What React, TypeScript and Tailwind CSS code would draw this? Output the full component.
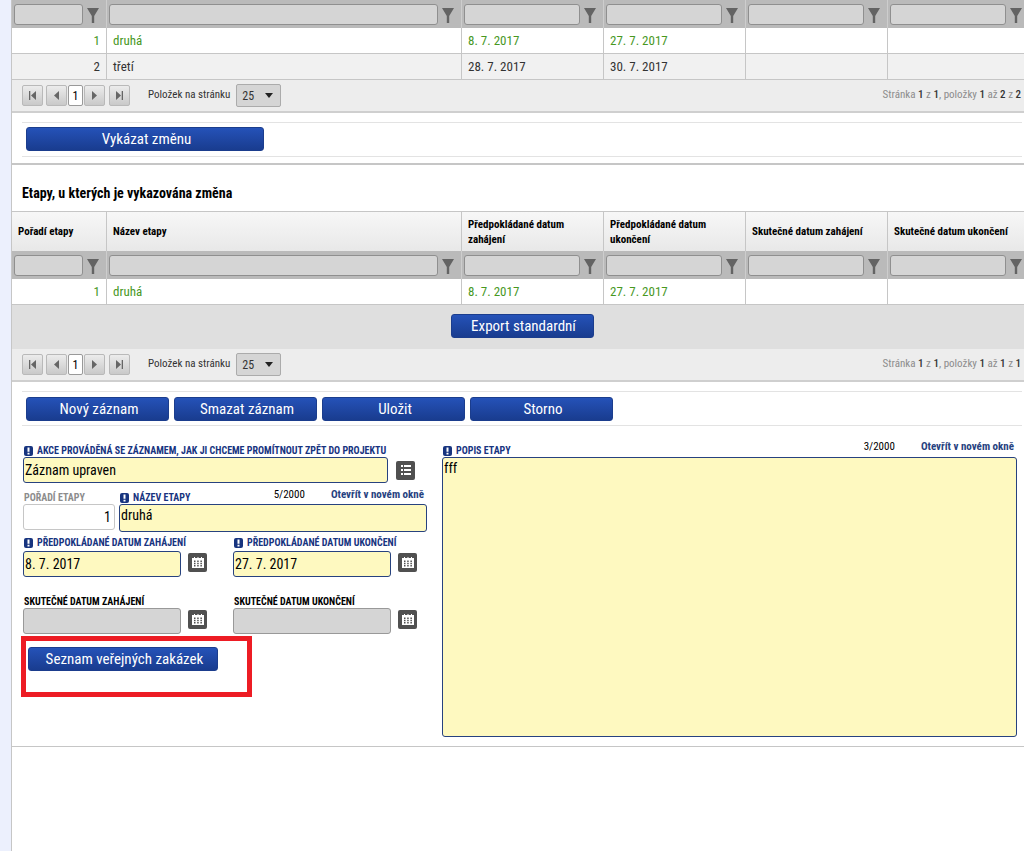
import React from "react";

type Row = {
  order: number;
  name: string;
  plannedStart: string;
  plannedEnd: string;
  changed?: boolean;
};

const columns = [
  "Pořadí etapy",
  "Název etapy",
  "Předpokládané datum zahájení",
  "Předpokládané datum ukončení",
  "Skutečné datum zahájení",
  "Skutečné datum ukončení"
];

const allRows: Row[] = [
  { order: 1, name: "druhá", plannedStart: "8. 7. 2017", plannedEnd: "27. 7. 2017", changed: true },
  { order: 2, name: "třetí", plannedStart: "28. 7. 2017", plannedEnd: "30. 7. 2017" }
];

const changedRows: Row[] = [allRows[0]];

const FunnelIcon = () => (
  <svg width="12" height="15" viewBox="0 0 12 15" fill="#636363">
    <path d="M0 0h12L7.2 8V15H4.8V8z" />
  </svg>
);

const CalendarIcon = () => (
  <svg width="12" height="12" viewBox="0 0 12 12">
    <path d="M0 1h2V0h1v1h2.500V0h1v1H9V0h1v1h2v10H0z" fill="#fff" />
    <path
      d="M2 3.500h1.500V5H2zM5.200 3.500h1.500V5H5.200zM8.400 3.500h1.500V5H8.400zM2 5.800h1.500v1.500H2zM5.200 5.800h1.500v1.500H5.200zM8.400 5.800h1.500v1.500H8.400zM2 8.100h1.500v1.500H2zM5.200 8.100h1.500v1.500H5.200zM8.400 8.100h1.500v1.500H8.400z"
      fill="#505050"
    />
  </svg>
);

const ListIcon = () => (
  <svg width="12" height="12" viewBox="0 0 12 12" fill="#fff">
    <path d="M1 1h2v2H1zM4 1h7v2H4zM1 5h2v2H1zM4 5h7v2H4zM1 9h2v2H1zM4 9h7v2H4z" />
  </svg>
);

const RequiredIcon = () => (
  <svg width="9" height="10" viewBox="0 0 9 10" className="shrink-0">
    <rect width="9" height="10" rx="2" fill="#17347f" />
    <path d="M3.5 1.5h2v4.2h-2zM3.5 6.8h2v1.7h-2z" fill="#fff" />
  </svg>
);

const BlueButton = ({ children, className = "" }: { children: React.ReactNode; className?: string }) => (
  <button
    type="button"
    className={`h-6 rounded-[3px] border border-[#1b3d8d] bg-gradient-to-b from-[#2552b8] to-[#193c8f] pl-[3px] text-center text-[15px] leading-5 text-white ${className}`}
  >
    {children}
  </button>
);

const IconButton = ({ label, children }: { label: string; children: React.ReactNode }) => (
  <button
    type="button"
    aria-label={label}
    className="flex size-[19px] shrink-0 items-center justify-center rounded-[2px] bg-[#505050]"
  >
    {children}
  </button>
);

const FieldLabel = ({
  htmlFor,
  required,
  className = "text-[#17347f]",
  children
}: {
  htmlFor: string;
  required?: boolean;
  className?: string;
  children: React.ReactNode;
}) => (
  <label
    htmlFor={htmlFor}
    className={`flex items-center gap-1 whitespace-nowrap pl-px pt-0.5 text-[10px] font-bold uppercase leading-3 ${className}`}
  >
    {required && <RequiredIcon />}
    {children}
  </label>
);

const StagesTable = ({ rows, showHeader, label }: { rows: Row[]; showHeader?: boolean; label: string }) => (
  <table aria-label={label} className="w-[calc(100%+6px)] table-fixed border-separate border-spacing-0 text-[13px] text-[#333]">
    <colgroup>
      <col className="w-[95px]" />
      <col />
      <col className="w-[142px]" />
      <col className="w-[142px]" />
      <col className="w-[142px]" />
      <col className="w-[142px]" />
    </colgroup>
    <thead>
      {showHeader && (
        <tr className="h-10 text-left text-[11px] leading-[15px] text-black">
          {columns.map((column) => (
            <th
              key={column}
              className="border-r border-t border-[#c6c6c6] bg-gradient-to-b from-[#f7f7f7] to-[#e8e8e8] px-1.5 font-bold"
            >
              {column}
            </th>
          ))}
        </tr>
      )}
      <tr>
        {columns.map((column) => (
          <td key={column} className="border-r border-[#cdcdcd] bg-[#bababa] p-0">
            <div className="flex h-7 items-end gap-1 pb-[3px] pl-0.5 pr-[7px]">
              <input
                aria-label={`Filtr ${column}`}
                className="h-[21px] min-w-0 flex-1 rounded-[3px] border border-[#8f8f8f] bg-[#d5d5d5] px-1"
              />
              <button type="button" aria-label={`Filtrovat ${column}`} className="shrink-0 pb-0.5">
                <FunnelIcon />
              </button>
            </div>
          </td>
        ))}
      </tr>
    </thead>
    <tbody>
      {rows.map((row) => (
        <tr
          key={row.order}
          className={`h-[26px] leading-5 *:border-b *:border-r *:border-[#c6c6c6] *:px-1.5 *:pb-0 *:pt-px ${
            row.changed ? "bg-white text-[#48981f]" : "bg-[#f1f1f1]"
          }`}
        >
          <td className="text-right">{row.order}</td>
          <td>{row.name}</td>
          <td>{row.plannedStart}</td>
          <td>{row.plannedEnd}</td>
          <td></td>
          <td></td>
        </tr>
      ))}
    </tbody>
  </table>
);

const PagerButton = ({ label, path }: { label: string; path: string }) => (
  <button
    type="button"
    aria-label={label}
    className="flex size-[21px] items-center justify-center rounded-[2px] border border-[#b9b9b9] bg-gradient-to-b from-[#ececec] to-[#c9c9c9]"
  >
    <svg width="9" height="9" viewBox="0 0 9 9" fill="#666">
      <path d={path} />
    </svg>
  </button>
);

const Pager = ({ id, total }: { id: string; total: number }) => (
  <div className="flex h-[33px] items-center border-b-2 border-[#cfcfcf] bg-[#ededed] pl-2.5 pr-[3px] text-[11px] text-[#333]">
    <PagerButton label="První stránka" path="M1 0h1.3v9H1zM8 0v9L3 4.500z" />
    <span className="w-[3px]" />
    <PagerButton label="Předchozí stránka" path="M7 0v9L2 4.500z" />
    <button
      type="button"
      className="mx-px h-[21px] w-[15px] rounded-[2px] border border-[#999] bg-white text-center text-xs text-black"
    >
      1
    </button>
    <PagerButton label="Další stránka" path="M2 0v9l5-4.500z" />
    <span className="w-1" />
    <PagerButton label="Poslední stránka" path="M1 0v9l5-4.500zM6.700 0H8v9H6.700z" />
    <label htmlFor={id} className="ml-[18px] mr-1.5 whitespace-nowrap">
      Položek na stránku
    </label>
    <div className="relative">
      <select
        id={id}
        className="block h-[23px] w-[45px] appearance-none rounded-[2px] border border-[#ababab] bg-[#d5d5d5] pl-[5px] text-xs"
      >
        <option>25</option>
      </select>
      <svg className="pointer-events-none absolute right-2 top-[9px]" width="8" height="5" viewBox="0 0 8 5" fill="#222">
        <path d="M0 0h8L4 5z" />
      </svg>
    </div>
    <p className="ml-auto whitespace-nowrap text-[#8c8c8c] [&>b]:font-medium [&>b]:text-[#333]">
      Stránka <b>1</b> z <b>1</b>, položky <b>1</b> až <b>{total}</b> z <b>{total}</b>
    </p>
  </div>
);

const inputBase = "h-[26px] rounded-[3px] border px-px text-sm text-black";

const DateField = ({
  id,
  label,
  value,
  required
}: {
  id: string;
  label: string;
  value?: string;
  required?: boolean;
}) => (
  <div>
    <FieldLabel htmlFor={id} required={required} className={required ? "text-[#17347f]" : "text-black"}>
      {label}
    </FieldLabel>
    <div className={`flex gap-[7px] ${required ? "pt-0.5" : ""}`}>
      <input
        id={id}
        defaultValue={value}
        disabled={!required}
        className={`${inputBase} w-[158px] ${
          required ? "border-[#27427f] bg-[#fef9c0]" : "border-[#999] bg-[#d5d5d5]"
        }`}
      />
      <div className="pt-0.5">
        <IconButton label={`Kalendář ${label}`}>
          <CalendarIcon />
        </IconButton>
      </div>
    </div>
  </div>
);

const ExpandInfo = ({ count }: { count: string }) => (
  <div className="flex gap-[26px] whitespace-nowrap text-[11px] leading-4">
    <span className="text-black">{count}</span>
    <a href="#" className="font-bold text-[#27427f]">
      Otevřít v novém okně
    </a>
  </div>
);

const StageForm = () => (
  <form className="flex gap-[15px] pb-[9px] pl-[11px] pr-[7px] pt-3">
    <div className="w-[404px] shrink-0 pt-[5px]">
      <FieldLabel htmlFor="akce" required>
        Akce prováděná se záznamem, jak ji chceme promítnout zpět do projektu
      </FieldLabel>
      <div className="flex items-center gap-2">
        <input
          id="akce"
          defaultValue="Záznam upraven"
          className={`${inputBase} w-[365px] border-[#27427f] bg-[#fef9c0]`}
        />
        <IconButton label="Vybrat ze seznamu">
          <ListIcon />
        </IconButton>
      </div>

      <div className="flex gap-1 pt-1">
        <div className="w-[92px]">
          <div className="pt-[3px]">
            <FieldLabel htmlFor="poradi" className="text-[#8c8c8c]">
              Pořadí etapy
            </FieldLabel>
          </div>
          <input
            id="poradi"
            defaultValue="1"
            readOnly
            className={`${inputBase} w-full border-[#c6c6c6] bg-white pr-[3px] text-right`}
          />
        </div>
        <div className="flex-1">
          <div className="flex items-start justify-between pr-[3px]">
            <div className="pt-[3px]">
              <FieldLabel htmlFor="nazev" required>
                Název etapy
              </FieldLabel>
            </div>
            <ExpandInfo count="5/2000" />
          </div>
          <textarea
            id="nazev"
            defaultValue="druhá"
            className="block h-7 w-full resize-none overflow-hidden rounded-[3px] border border-[#27427f] bg-[#fef9c0] px-px text-sm text-black"
          />
        </div>
      </div>

      <div className="grid grid-cols-[210px_1fr] pt-[3px]">
        <DateField id="plan-zahajeni" label="Předpokládané datum zahájení" value="8. 7. 2017" required />
        <DateField id="plan-ukonceni" label="Předpokládané datum ukončení" value="27. 7. 2017" required />
      </div>
      <div className="grid grid-cols-[210px_1fr] pt-[17px]">
        <DateField id="skut-zahajeni" label="Skutečné datum zahájení" />
        <DateField id="skut-ukonceni" label="Skutečné datum ukončení" />
      </div>

      <div className="-ml-0.5 mt-0.5 h-[61px] w-[231px] border-[5px] border-[#ed1c24] pl-0.5 pt-1.5">
        <BlueButton className="w-[190px]">Seznam veřejných zakázek</BlueButton>
      </div>
    </div>

    <div className="flex flex-1 flex-col">
      <div className="flex items-start justify-between pr-[3px]">
        <div className="pt-[5px]">
          <FieldLabel htmlFor="popis" required>
            Popis etapy
          </FieldLabel>
        </div>
        <div className="pt-px">
          <ExpandInfo count="3/2000" />
        </div>
      </div>
      <textarea
        id="popis"
        defaultValue="fff"
        className="block min-h-[280px] w-full flex-1 resize-none rounded-[3px] border border-[#27427f] bg-[#fef9c0] px-px text-sm text-black"
      />
    </div>
  </form>
);

const App = () => {
  return (
    <div className="flex min-h-screen overflow-hidden bg-white font-['Roboto_Condensed','Liberation_Sans_Narrow',Roboto,sans-serif]">
      <aside className="w-[11px] shrink-0 bg-[#ecf0fd]"></aside>
      <main className="min-w-0 flex-1 border-l border-[#c6c6c6]">
        <section className="border-b-2 border-[#c6c6c6] pb-1.5">
          <StagesTable rows={allRows} label="Etapy" />
          <Pager id="pocet-etapy" total={2} />
          <div className="ml-2.5 mr-0.5 mt-[9px] border-y border-[#e3e3e3] px-1 pb-[5px] pt-1">
            <BlueButton className="block w-[238px]">Vykázat změnu</BlueButton>
          </div>
        </section>

        <section className="border-b border-[#c6c6c6]">
          <h2 className="px-2.5 pb-2 pt-[18px] text-sm font-bold leading-5 text-black">
            Etapy, u kterých je vykazována změna
          </h2>
          <StagesTable rows={changedRows} showHeader label="Etapy, u kterých je vykazována změna" />
          <div className="flex h-11 items-start justify-center bg-[#dfdfdf] pl-2 pt-[9px]">
            <BlueButton className="w-[143px]">Export standardní</BlueButton>
          </div>
          <Pager id="pocet-zmeny" total={1} />
          <div className="ml-2.5 mr-0.5 mt-[9px] flex gap-[5px] border-y border-[#e3e3e3] px-1 pb-1 pt-[5px]">
            <BlueButton className="w-[143px]">Nový záznam</BlueButton>
            <BlueButton className="w-[143px]">Smazat záznam</BlueButton>
            <BlueButton className="w-[143px]">Uložit</BlueButton>
            <BlueButton className="w-[143px]">Storno</BlueButton>
          </div>
          <StageForm />
        </section>
      </main>
    </div>
  );
};

export default App;
